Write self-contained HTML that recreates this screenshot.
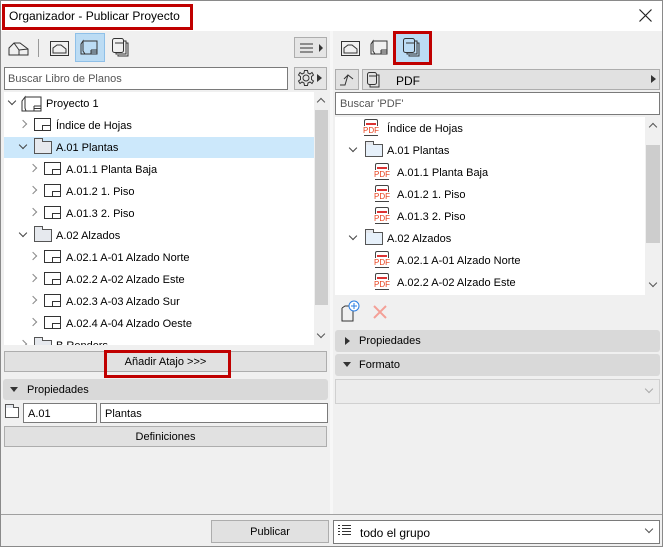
<!DOCTYPE html>
<html><head><meta charset="utf-8"><style>
*{box-sizing:border-box;margin:0;padding:0}
body{width:663px;height:547px;overflow:hidden;background:#f0f0f0;font-family:"Liberation Sans",Arial,sans-serif;font-size:11px;color:#000;position:relative}
.a{position:absolute}
.win{left:0;top:0;width:663px;height:547px;border:1px solid #8a8a8a}
.btn{position:absolute;background:#e1e1e1;border:1px solid #adadad;text-align:center;line-height:18px}
.inp{position:absolute;background:#fff;border:1px solid #7a7a7a}
.row{position:absolute;height:22px;line-height:24px;white-space:nowrap}
.chev{position:absolute;width:6px;height:6px;border-right:1.3px solid #888;border-bottom:1.3px solid #888}
.cr{transform:rotate(-45deg)}
.cd{transform:rotate(45deg);border-color:#444}
.sheet{position:absolute;width:17px;height:13px;border:1px solid #333;background:#fff}
.sheet:after{content:"";position:absolute;right:0;bottom:0;width:7px;height:4px;border-left:1px solid #333;border-top:1px solid #333}
.fold{position:absolute;width:18px;height:13px;border:1px solid #555;background:#e6e9ee}
.fold:before{content:"";position:absolute;left:-1px;top:-4px;width:7px;height:3px;border:1px solid #555;border-bottom:none;background:#e6e9ee}
.pdf{position:absolute;width:14px;height:17px;border:1px solid #444;border-radius:2px 2px 0 0;background:#fff}
.pdf:before{content:"";position:absolute;left:1px;right:1px;top:3px;height:2px;background:#d33}
.pdf:after{content:"PDF";position:absolute;left:-2px;top:6px;font-size:8px;line-height:9px;color:#e8401c;background:#fff}
.hdr{position:absolute;background:#d9d9d9;border-radius:3px;height:21px;line-height:22px;padding-left:24px}
</style></head><body>
<div class="a win"></div>
<div class="a" style="left:1px;top:1px;width:661px;height:30px;background:#fff"></div>
<div class="a" style="left:2px;top:4px;width:191px;height:26px;border:3px solid #c00000"></div>
<div class="a" style="left:9px;top:9px;font-size:12px">Organizador - Publicar Proyecto</div>
<svg class="a" style="left:639px;top:9px" width="13" height="13"><path d="M0.5 0.5L12.5 12.5M12.5 0.5L0.5 12.5" stroke="#222" stroke-width="1.2"/></svg>

<!-- left toolbar -->
<svg class="a" style="left:8px;top:40px" width="22" height="18"><path d="M1 15V8L6 3H12L20 9V15Z M6 3L11 10V15 M11 10L20 9" fill="none" stroke="#333"/></svg>
<div class="a" style="left:38px;top:39px;width:1px;height:18px;background:#999"></div>
<svg class="a" style="left:49px;top:38px" width="22" height="20"><rect x="1.5" y="3.5" width="18" height="14" fill="none" stroke="#333"/><path d="M4 15V10L8 7H12L17 11V15Z" fill="none" stroke="#333"/></svg>
<div class="a" style="left:75px;top:33px;width:30px;height:29px;background:#bcdcf4;border:1px solid #8fc0e8"></div>
<svg class="a" style="left:79px;top:37px" width="22" height="20"><path d="M4 4L2 7V17H6L4 14Z M4 4H18V17H4 M12 13H18 M12 13V17 M12 15H18" fill="none" stroke="#333"/></svg>
<svg class="a" style="left:111px;top:37px" width="20" height="21"><rect x="1.5" y="1.5" width="11" height="14" rx="2" fill="none" stroke="#333"/><path d="M4 6H12 M13 4H15V17H5V16 M15 6H17V19H7V18" fill="none" stroke="#333"/></svg>
<div class="btn" style="left:294px;top:37px;width:33px;height:21px;background:#e5e5e5"></div>
<svg class="a" style="left:300px;top:42px" width="26" height="12"><path d="M0 2H13M0 6H13M0 10H13" stroke="#333"/><path d="M19 2L23 6L19 10Z" fill="#333"/></svg>
<div class="inp" style="left:4px;top:67px;width:284px;height:23px"></div>
<div class="a" style="left:8px;top:73px;color:#555">Buscar Libro de Planos</div>
<div class="btn" style="left:294px;top:67px;width:33px;height:23px;background:#e5e5e5"></div>
<svg class="a" style="left:297px;top:69px" width="18" height="18"><g fill="none" stroke="#333"><circle cx="9" cy="9" r="3"/><path d="M7.5 1.5H10.5L11 4L13 5L15 3.5L16.5 6L14.5 7.5V10.5L16.5 12L15 14.5L13 13L11 14L10.5 16.5H7.5L7 14L5 13L3 14.5L1.5 12L3.5 10.5V7.5L1.5 6L3 3.5L5 5L7 4Z"/></g></svg>
<svg class="a" style="left:317px;top:73px" width="6" height="10"><path d="M0 1L5 5L0 9Z" fill="#333"/></svg>

<!-- left tree -->
<div class="a" style="left:4px;top:92px;width:310px;height:253px;background:#fff;overflow:hidden">
<div class="a" style="left:0;top:45px;width:310px;height:21px;background:#cce8fb"></div>
<div class="chev cd" style="left:5px;top:6px"></div><svg class="a" style="left:17px;top:3px" width="22" height="18"><path d="M4 2L1 6V16H5L4 13Z M4 2H20V16H4 M13 11H20 M13 11V16 M13 13.5H20" fill="none" stroke="#333"/></svg><div class="row" style="left:42px;top:0">Proyecto 1</div>
<div class="chev cr" style="left:16px;top:29px"></div><div class="sheet" style="left:30px;top:26px"></div><div class="row" style="left:52px;top:22px">Índice de Hojas</div>
<div class="chev cd" style="left:16px;top:50px"></div><div class="fold" style="left:30px;top:49px"></div><div class="row" style="left:52px;top:44px">A.01 Plantas</div>
<div class="chev cr" style="left:26px;top:73px"></div><div class="sheet" style="left:40px;top:70px"></div><div class="row" style="left:62px;top:66px">A.01.1 Planta Baja</div>
<div class="chev cr" style="left:26px;top:95px"></div><div class="sheet" style="left:40px;top:92px"></div><div class="row" style="left:62px;top:88px">A.01.2 1. Piso</div>
<div class="chev cr" style="left:26px;top:117px"></div><div class="sheet" style="left:40px;top:114px"></div><div class="row" style="left:62px;top:110px">A.01.3 2. Piso</div>
<div class="chev cd" style="left:16px;top:138px"></div><div class="fold" style="left:30px;top:137px"></div><div class="row" style="left:52px;top:132px">A.02 Alzados</div>
<div class="chev cr" style="left:26px;top:161px"></div><div class="sheet" style="left:40px;top:158px"></div><div class="row" style="left:62px;top:154px">A.02.1 A-01 Alzado Norte</div>
<div class="chev cr" style="left:26px;top:183px"></div><div class="sheet" style="left:40px;top:180px"></div><div class="row" style="left:62px;top:176px">A.02.2 A-02 Alzado Este</div>
<div class="chev cr" style="left:26px;top:205px"></div><div class="sheet" style="left:40px;top:202px"></div><div class="row" style="left:62px;top:198px">A.02.3 A-03 Alzado Sur</div>
<div class="chev cr" style="left:26px;top:227px"></div><div class="sheet" style="left:40px;top:224px"></div><div class="row" style="left:62px;top:220px">A.02.4 A-04 Alzado Oeste</div>
<div class="chev cr" style="left:16px;top:249px"></div><div class="fold" style="left:30px;top:248px"></div><div class="row" style="left:52px;top:242px">B Renders</div>
</div>
<div class="a" style="left:314px;top:92px;width:14px;height:253px;background:#f0f0f0"></div>
<div class="a" style="left:315px;top:110px;width:13px;height:195px;background:#cdcdcd"></div>
<div class="chev" style="left:318px;top:99px;transform:rotate(-135deg);border-color:#555"></div>
<div class="chev" style="left:318px;top:331px;transform:rotate(45deg);border-color:#555"></div>

<div class="btn" style="left:4px;top:351px;width:323px;height:21px;line-height:20px">Añadir Atajo &gt;&gt;&gt;</div>
<div class="a" style="left:104px;top:350px;width:127px;height:28px;border:3px solid #c00000"></div>
<div class="hdr" style="left:3px;top:379px;width:325px">Propiedades</div>
<svg class="a" style="left:10px;top:387px" width="9" height="6"><path d="M0 0H8L4 5Z" fill="#333"/></svg>
<div class="fold" style="left:5px;top:407px;width:14px;height:11px;background:#fff"></div>
<div class="inp" style="left:23px;top:403px;width:74px;height:20px;padding:4px 4px">A.01</div>
<div class="inp" style="left:100px;top:403px;width:228px;height:20px;padding:4px 4px">Plantas</div>
<div class="btn" style="left:4px;top:426px;width:323px;height:21px;line-height:20px">Definiciones</div>

<div class="a" style="left:330px;top:31px;width:3px;height:484px;background:#f7f7f7"></div>

<!-- right toolbar -->
<svg class="a" style="left:340px;top:38px" width="22" height="20"><rect x="1.5" y="3.5" width="18" height="14" fill="none" stroke="#333"/><path d="M4 15V10L8 7H12L17 11V15Z" fill="none" stroke="#333"/></svg>
<svg class="a" style="left:369px;top:37px" width="22" height="20"><path d="M4 4L2 7V17H6L4 14Z M4 4H18V17H4 M12 13H18 M12 13V17 M12 15H18" fill="none" stroke="#333"/></svg>
<div class="a" style="left:393px;top:31px;width:39px;height:34px;background:#bcdcf4;border:3px solid #c00000"></div>
<svg class="a" style="left:402px;top:37px" width="20" height="21"><rect x="1.5" y="1.5" width="11" height="14" rx="2" fill="none" stroke="#333"/><path d="M4 6H12 M13 4H15V17H5V16 M15 6H17V19H7V18" fill="none" stroke="#333"/></svg>
<div class="btn" style="left:335px;top:69px;width:24px;height:21px"></div>
<svg class="a" style="left:339px;top:72px" width="16" height="14"><path d="M1 13L6 13L9 3L14 7M9 3L5 7" fill="none" stroke="#333"/></svg>
<div class="btn" style="left:362px;top:69px;width:298px;height:21px"></div>
<svg class="a" style="left:366px;top:71px" width="16" height="17"><rect x="1.5" y="1.5" width="9" height="12" rx="2" fill="none" stroke="#333"/><path d="M3 5H10 M11 4H13V16H4V14" fill="none" stroke="#333"/></svg>
<div class="a" style="left:396px;top:74px;font-size:12px">PDF</div>
<svg class="a" style="left:651px;top:74px" width="6" height="10"><path d="M0 1L5 5L0 9Z" fill="#333"/></svg>
<div class="inp" style="left:335px;top:92px;width:325px;height:23px"></div>
<div class="a" style="left:340px;top:98px;color:#555">Buscar 'PDF'</div>

<div class="a" style="left:335px;top:117px;width:310px;height:178px;background:#fff;overflow:hidden">
<div class="pdf" style="left:29px;top:2px"></div><div class="row" style="left:52px;top:0">Índice de Hojas</div>
<div class="chev cd" style="left:15px;top:28px"></div><div class="fold" style="left:30px;top:27px;background:#e6f0fa"></div><div class="row" style="left:52px;top:22px">A.01 Plantas</div>
<div class="pdf" style="left:40px;top:46px"></div><div class="row" style="left:62px;top:44px">A.01.1 Planta Baja</div>
<div class="pdf" style="left:40px;top:68px"></div><div class="row" style="left:62px;top:66px">A.01.2 1. Piso</div>
<div class="pdf" style="left:40px;top:90px"></div><div class="row" style="left:62px;top:88px">A.01.3 2. Piso</div>
<div class="chev cd" style="left:15px;top:116px"></div><div class="fold" style="left:30px;top:115px;background:#e6f0fa"></div><div class="row" style="left:52px;top:110px">A.02 Alzados</div>
<div class="pdf" style="left:40px;top:134px"></div><div class="row" style="left:62px;top:132px">A.02.1 A-01 Alzado Norte</div>
<div class="pdf" style="left:40px;top:156px"></div><div class="row" style="left:62px;top:154px">A.02.2 A-02 Alzado Este</div>
<div class="pdf" style="left:40px;top:178px"></div>
</div>
<div class="a" style="left:645px;top:117px;width:15px;height:178px;background:#f0f0f0"></div>
<div class="a" style="left:646px;top:145px;width:14px;height:98px;background:#cdcdcd"></div>
<div class="chev" style="left:650px;top:124px;transform:rotate(-135deg);border-color:#555"></div>
<div class="chev" style="left:650px;top:280px;transform:rotate(45deg);border-color:#555"></div>

<svg class="a" style="left:339px;top:300px" width="24" height="22"><path d="M3 8V21H14V9 M3 8L6 6H11" fill="none" stroke="#333"/><circle cx="15" cy="6" r="5" fill="#fff" stroke="#2a7de1"/><path d="M15 3V9M12 6H18" stroke="#2a7de1"/></svg>
<svg class="a" style="left:372px;top:304px" width="16" height="16"><path d="M2 2L14 14M14 2L2 14" stroke="#f4a097" stroke-width="2"/></svg>
<div class="hdr" style="left:335px;top:330px;width:325px;height:22px;line-height:23px">Propiedades</div>
<svg class="a" style="left:345px;top:337px" width="6" height="9"><path d="M0 0L5 4L0 8Z" fill="#333"/></svg>
<div class="hdr" style="left:335px;top:354px;width:325px;height:22px;line-height:23px">Formato</div>
<svg class="a" style="left:343px;top:362px" width="9" height="6"><path d="M0 0H8L4 5Z" fill="#333"/></svg>
<div class="a" style="left:335px;top:379px;width:325px;height:25px;border:1px solid #d0d0d0;background:#ececec"></div>
<div class="chev" style="left:646px;top:386px;transform:rotate(45deg);border-color:#aaa"></div>

<div class="a" style="left:1px;top:514px;width:661px;height:1px;background:#a0a0a0"></div>
<div class="btn" style="left:211px;top:520px;width:118px;height:23px;line-height:22px">Publicar</div>
<div class="inp" style="left:333px;top:520px;width:327px;height:24px"></div>
<svg class="a" style="left:338px;top:524px" width="14" height="12"><path d="M0 1.5H2M4 1.5H13M0 4.5H2M4 4.5H13M0 7.5H2M4 7.5H13M0 10.5H2M4 10.5H13" stroke="#333"/></svg>
<div class="a" style="left:360px;top:526px;font-size:12px">todo el grupo</div>
<div class="chev" style="left:646px;top:526px;transform:rotate(45deg);border-color:#555"></div>
</body></html>
